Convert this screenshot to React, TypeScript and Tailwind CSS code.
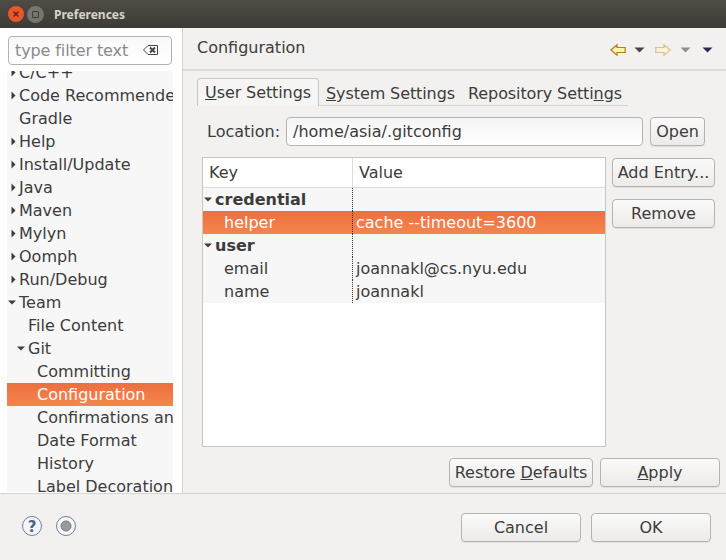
import type { ReactNode } from "react";

const treeRows: { label: string; indent: number; arrow?: "right" | "down"; selected?: boolean }[] = [
  { label: "Code Recommenders", indent: 12, arrow: "right" },
  { label: "Gradle", indent: 12 },
  { label: "Help", indent: 12, arrow: "right" },
  { label: "Install/Update", indent: 12, arrow: "right" },
  { label: "Java", indent: 12, arrow: "right" },
  { label: "Maven", indent: 12, arrow: "right" },
  { label: "Mylyn", indent: 12, arrow: "right" },
  { label: "Oomph", indent: 12, arrow: "right" },
  { label: "Run/Debug", indent: 12, arrow: "right" },
  { label: "Team", indent: 12, arrow: "down" },
  { label: "File Content", indent: 21 },
  { label: "Git", indent: 21, arrow: "down" },
  { label: "Committing", indent: 30 },
  { label: "Configuration", indent: 30, selected: true },
  { label: "Confirmations and", indent: 30 },
  { label: "Date Format", indent: 30 },
  { label: "History", indent: 30 },
  { label: "Label Decorations", indent: 30 },
];

function Arrow({ dir, x }: { dir: "right" | "down"; x: number }) {
  if (dir === "right") {
    return (
      <svg className="absolute top-[7px]" style={{ left: x }} width="5" height="9" viewBox="0 0 5 9">
        <path d="M0.500 0.500l4 4-4 4z" fill="#3c3c3c" />
      </svg>
    );
  }
  return (
    <svg className="absolute top-[9px]" style={{ left: x }} width="8" height="5" viewBox="0 0 8 5">
      <path d="M0 0.500h8L4 4.500z" fill="#3c3c3c" />
    </svg>
  );
}

function Btn({ className, children }: { className: string; children: ReactNode }) {
  return (
    <button className={`flex h-[29px] items-center justify-center rounded-[4px] border border-[#b5b3ae] bg-gradient-to-b from-[#fbfafa] to-[#ecebe9] pt-px text-[#3c3c3c] shadow-[0_1px_0_#e0dfdc] ${className}`}>
      {children}
    </button>
  );
}

function TableRow({ k, v, bold, selected, arrow }: { k: string; v?: string; bold?: boolean; selected?: boolean; arrow?: boolean }) {
  return (
    <div className={`flex h-[23px] leading-[23px] ${selected ? "bg-gradient-to-b from-[#ec6f3f] to-[#f6854f] text-white" : "bg-[#f7f7f7] text-[#3c3c3c]"}`}>
      <div className={`relative w-[150px] border-r border-dotted border-[#333333] ${bold ? "pl-[12px] font-bold" : "pl-[21px]"}`}>
        {arrow && <Arrow dir="down" x={1} />}
        {k}
      </div>
      <div className="pl-[3px]">{v}</div>
    </div>
  );
}

export default function App() {
  return (
    <div className="flex h-[560px] w-[726px] flex-col overflow-hidden bg-[#f2f1f0] text-[16px] text-[#3c3c3c] [font-family:'DejaVu_Sans',sans-serif]">
      {/* title bar */}
      <div className="flex h-[28px] items-center bg-gradient-to-b from-[#4f4c45] to-[#3c3b37] pl-[8px]">
        <div className="flex h-[16px] w-[16px] items-center justify-center rounded-full bg-[#e9562a] text-[#4a2317]">
          <svg width="8" height="8" viewBox="0 0 8 8">
            <path d="M1.500 1.500l5 5M6.500 1.500l-5 5" stroke="#4a2317" strokeWidth="1.200" />
          </svg>
        </div>
        <div className="ml-[3px] flex h-[17px] w-[17px] items-center justify-center rounded-full bg-[#77756f]">
          <div className="h-[7px] w-[7px] rounded-[1px] border border-[#3d3c38]" />
        </div>
        <span className="ml-[10px] pt-px text-[12px] font-bold text-[#d8d4cb] [font-family:'Noto_Sans',sans-serif]">Preferences</span>
      </div>

      <div className="flex h-[465px]">
        {/* left: filter and tree */}
        <div className="w-[183px] shrink-0 border-r border-[#d6d4d1] bg-white pl-[8px]">
          <div className="mt-[8px] flex h-[29px] w-[164px] items-center justify-between rounded-[4px] border border-[#b5b3ae] bg-gradient-to-b from-[#f8f8f8] to-white pb-px pl-[6px] pr-[13px] text-[#8a8a8a]">
            <span className="pt-[2px] tracking-[-0.1px]">type filter text</span>
            <svg width="15" height="10" viewBox="0 0 15 10">
              <path d="M0.500 5L5 0.500h9.500v9H5z" fill="#fff" stroke="#444" />
              <path d="M7 2.500l5 5M12 2.500l-5 5" stroke="#444" strokeWidth="2" />
            </svg>
          </div>
          <div className="-ml-px mt-[6px] h-[421px] w-[166px] overflow-hidden bg-[#f7f7f7]">
            <div className="relative -mt-[10px] h-[23px] whitespace-nowrap pl-[12px] leading-[23px]">
              <Arrow dir="right" x={4} />
              C/C++
            </div>
            {treeRows.map((r) => (
              <div
                key={r.label}
                className={`relative h-[23px] whitespace-nowrap leading-[23px] ${r.selected ? "bg-gradient-to-b from-[#ec6f3f] to-[#f6854f] text-white" : ""}`}
                style={{ paddingLeft: r.indent }}
              >
                {r.arrow && <Arrow dir={r.arrow} x={r.arrow === "right" ? r.indent - 8 : r.indent - 11} />}
                {r.label}
              </div>
            ))}
          </div>
        </div>

        {/* right: property page */}
        <div className="w-[543px]">
          <div className="flex h-[43px] items-center justify-between border-b-2 border-[#dcdbd8] pl-[14px] pr-[13px]">
            <span className="pb-px">Configuration</span>
            <div className="flex items-center pt-[3px]">
              <svg width="16" height="12" viewBox="0 0 16 12">
                <path d="M0.800 6L7 0.800V3.500h8.200v5H7v2.700z" fill="#fdf0b8" stroke="#b57d1a" strokeWidth="1.200" />
              </svg>
              <svg className="ml-[8px]" width="11" height="6" viewBox="0 0 11 6">
                <path d="M0.500 0.500h10L5.500 5.500z" fill="#444" />
              </svg>
              <svg className="ml-[10px]" width="16" height="12" viewBox="0 0 16 12">
                <path d="M15.200 6L9 0.800V3.500H0.800v5H9v2.700z" fill="#fbf3d8" stroke="#d8c088" strokeWidth="1.200" />
              </svg>
              <svg className="ml-[9px]" width="11" height="6" viewBox="0 0 11 6">
                <path d="M0.500 0.500h10L5.500 5.500z" fill="#8f8f8f" />
              </svg>
              <svg className="ml-[11px]" width="11" height="6" viewBox="0 0 11 6">
                <path d="M0.500 0.500h10L5.500 5.500z" fill="#2c2650" />
              </svg>
            </div>
          </div>

          {/* tabs */}
          <div className="ml-[14px] mt-[7px] flex h-[28px] items-end tracking-[-0.1px]">
            <div className="flex h-[28px] w-[122px] items-center justify-center rounded-t-[4px] border border-b-0 border-[#c9c7c3] bg-[#f6f5f4] pt-px">
              <span><u>U</u>ser Settings</span>
            </div>
            <div className="flex h-[26px] w-[143px] items-center justify-center border-b border-[#d6d4d1] pt-[3px]">
              <span><u>S</u>ystem Settings</span>
            </div>
            <div className="flex h-[26px] w-[166px] items-center justify-center border-b border-[#d6d4d1] pt-[3px]">
              <span>Repository Setti<u>n</u>gs</span>
            </div>
          </div>

          {/* location */}
          <div className="ml-[24px] mt-[11px] flex items-center">
            <span className="w-[79px] pt-px">Location:</span>
            <div className="flex h-[29px] w-[357px] items-center rounded-[4px] border border-[#b5b3ae] bg-gradient-to-b from-[#f5f5f5] to-white pl-[6px] pt-px">
              /home/asia/.gitconfig
            </div>
            <Btn className="ml-[7px] w-[55px]">Open</Btn>
          </div>

          {/* table and side buttons */}
          <div className="ml-[19px] mt-[11px] flex">
            <div className="h-[290px] w-[404px] border border-[#c9c7c3] bg-white">
              <div className="flex h-[30px] items-center border-b border-[#dddcd9]">
                <div className="flex h-full w-[150px] items-center border-r border-[#dddcd9] pl-[6px] pt-px">Key</div>
                <div className="pl-[6px] pt-px">Value</div>
              </div>
              <TableRow k="credential" bold arrow />
              <TableRow k="helper" v="cache --timeout=3600" selected />
              <TableRow k="user" bold arrow />
              <TableRow k="email" v="joannakl@cs.nyu.edu" />
              <TableRow k="name" v="joannakl" />
            </div>
            <div className="ml-[6px] flex flex-col gap-[12px] pt-px">
              <Btn className="w-[103px]">Add Entry...</Btn>
              <Btn className="w-[103px]">Remove</Btn>
            </div>
          </div>

          <div className="ml-[266px] mt-[11px] flex gap-[7px]">
            <Btn className="w-[144px]"><span>Restore <u>D</u>efaults</span></Btn>
            <Btn className="w-[120px]"><span><u>A</u>pply</span></Btn>
          </div>
        </div>
      </div>

      {/* footer */}
      <div className="flex flex-1 items-start border-t border-[#d6d4d1] pl-[22px] pt-[21px]">
        <svg width="20" height="22" viewBox="0 0 20 22">
          <circle cx="10" cy="11" r="9.500" fill="#f6f6f8" stroke="#6b7fa3" />
          <text x="10" y="16.500" textAnchor="middle" fontSize="15" fontWeight="700" fill="#4d5f85" fontFamily="DejaVu Sans">?</text>
        </svg>
        <svg className="ml-[14px]" width="20" height="22" viewBox="0 0 20 22">
          <circle cx="10" cy="11" r="9.500" fill="#f6f6f8" stroke="#6b7fa3" />
          <circle cx="10" cy="11" r="5" fill="#9a9a9a" stroke="#7c7c7c" />
        </svg>
        <div className="ml-auto mr-[15px] -mt-[2px] flex gap-[10px]">
          <Btn className="w-[120px]">Cancel</Btn>
          <Btn className="w-[120px]">OK</Btn>
        </div>
      </div>
    </div>
  );
}
